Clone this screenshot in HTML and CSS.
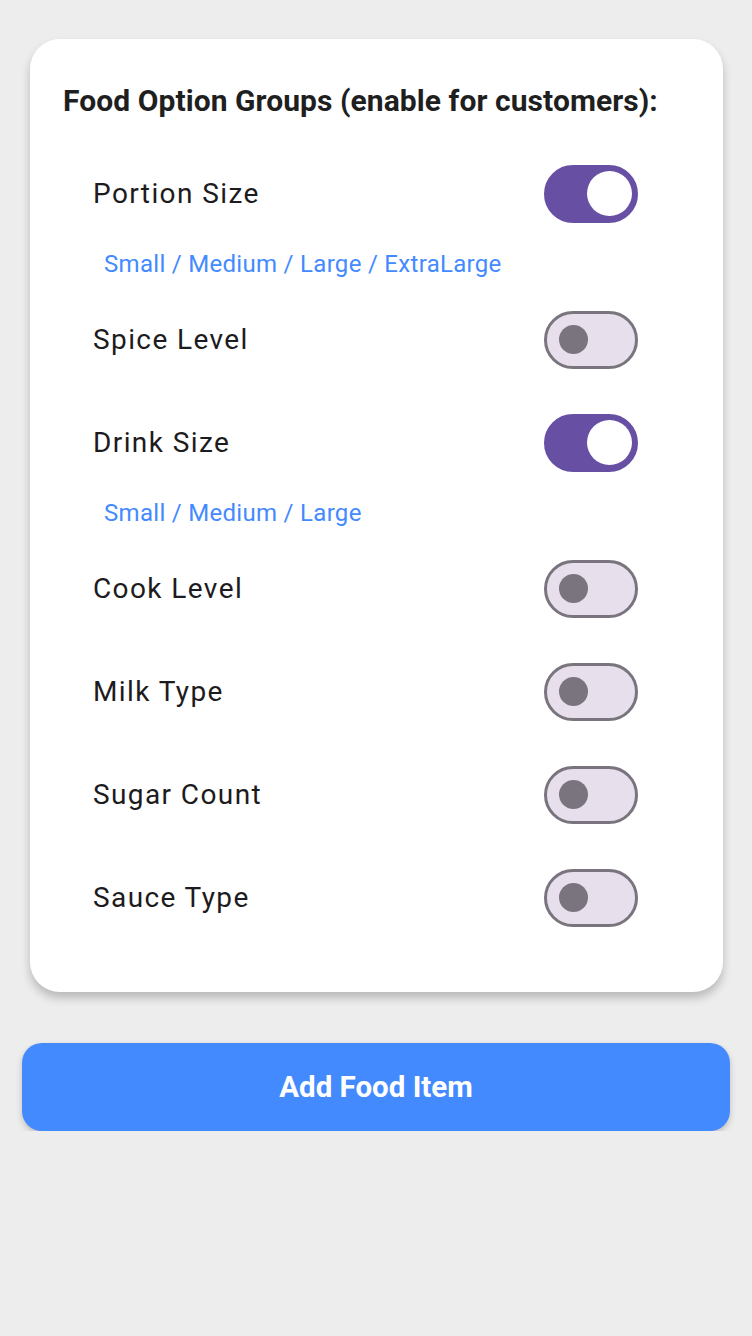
FILE: index.html
```html
<!DOCTYPE html>
<html lang="en">
<head>
    <meta charset="UTF-8">
    <meta name="viewport" content="width=device-width, initial-scale=1.0">
    <title>Add Food Item</title>
    <link rel="stylesheet" href="styles.css">
</head>
<body>
    <div class="page">
        <div class="options-card">
            <h2 class="options-title">Food Option Groups (enable for customers):</h2>

            <div class="option-row">
                <span class="option-label">Portion Size</span>
                <span class="switch on"><span class="thumb"></span></span>
            </div>
            <div class="option-values">Small / Medium / Large / ExtraLarge</div>

            <div class="option-row">
                <span class="option-label">Spice Level</span>
                <span class="switch"><span class="thumb"></span></span>
            </div>

            <div class="option-row">
                <span class="option-label">Drink Size</span>
                <span class="switch on"><span class="thumb"></span></span>
            </div>
            <div class="option-values">Small / Medium / Large</div>

            <div class="option-row">
                <span class="option-label">Cook Level</span>
                <span class="switch"><span class="thumb"></span></span>
            </div>

            <div class="option-row">
                <span class="option-label">Milk Type</span>
                <span class="switch"><span class="thumb"></span></span>
            </div>

            <div class="option-row">
                <span class="option-label">Sugar Count</span>
                <span class="switch"><span class="thumb"></span></span>
            </div>

            <div class="option-row">
                <span class="option-label">Sauce Type</span>
                <span class="switch"><span class="thumb"></span></span>
            </div>
        </div>

        <button class="add-button">Add Food Item</button>
    </div>
</body>
</html>
```

FILE: styles.css
```css
body {
    font-family: Roboto, "Noto Sans", sans-serif;
    margin: 0;
    background-color: #ededed;
    color: #1d1b20;
}

.page {
    padding: 39px 22px 0 22px;
}

.options-card {
    background-color: white;
    margin: 0 7px 0 8px;
    padding: 47px 33px 43px;
    border-radius: 30px;
    box-shadow: 0 6px 10px rgba(0, 0, 0, 0.22);
}

.options-title {
    margin: 0 0 26px;
    font-size: 30px;
    font-weight: 700;
    line-height: 30px;
    letter-spacing: 0.07px;
    color: #1f1f1f;
}

.option-row {
    display: flex;
    justify-content: space-between;
    align-items: center;
    height: 103px;
    padding: 0 52px 0 30px;
}

.option-label {
    font-size: 28px;
    letter-spacing: 1.4px;
    color: #1d1b20;
}

.option-values {
    padding: 4px 0 9px 41px;
    line-height: 30px;
    font-size: 24px;
    letter-spacing: 0.3px;
    color: #448aff;
}

.switch {
    display: flex;
    align-items: center;
    width: 94px;
    height: 58px;
    box-sizing: border-box;
    border: 3px solid #79747e;
    border-radius: 29px;
    background-color: #e7e0ec;
    padding-left: 12px;
}

.switch .thumb {
    width: 29px;
    height: 29px;
    border-radius: 50%;
    background-color: #79747e;
}

.switch.on {
    border-color: #6750a4;
    background-color: #6750a4;
    justify-content: flex-end;
    padding: 0 3px 0 0;
}

.switch.on .thumb {
    width: 45px;
    height: 45px;
    background-color: white;
}

.add-button {
    display: block;
    width: 100%;
    height: 88px;
    margin-top: 51px;
    border: none;
    border-radius: 20px;
    background-color: #448aff;
    color: white;
    font-family: Roboto, "Noto Sans", sans-serif;
    font-size: 29.5px;
    font-weight: 700;
    box-shadow: 0 3px 6px rgba(0, 0, 0, 0.2);
    cursor: pointer;
}
```
